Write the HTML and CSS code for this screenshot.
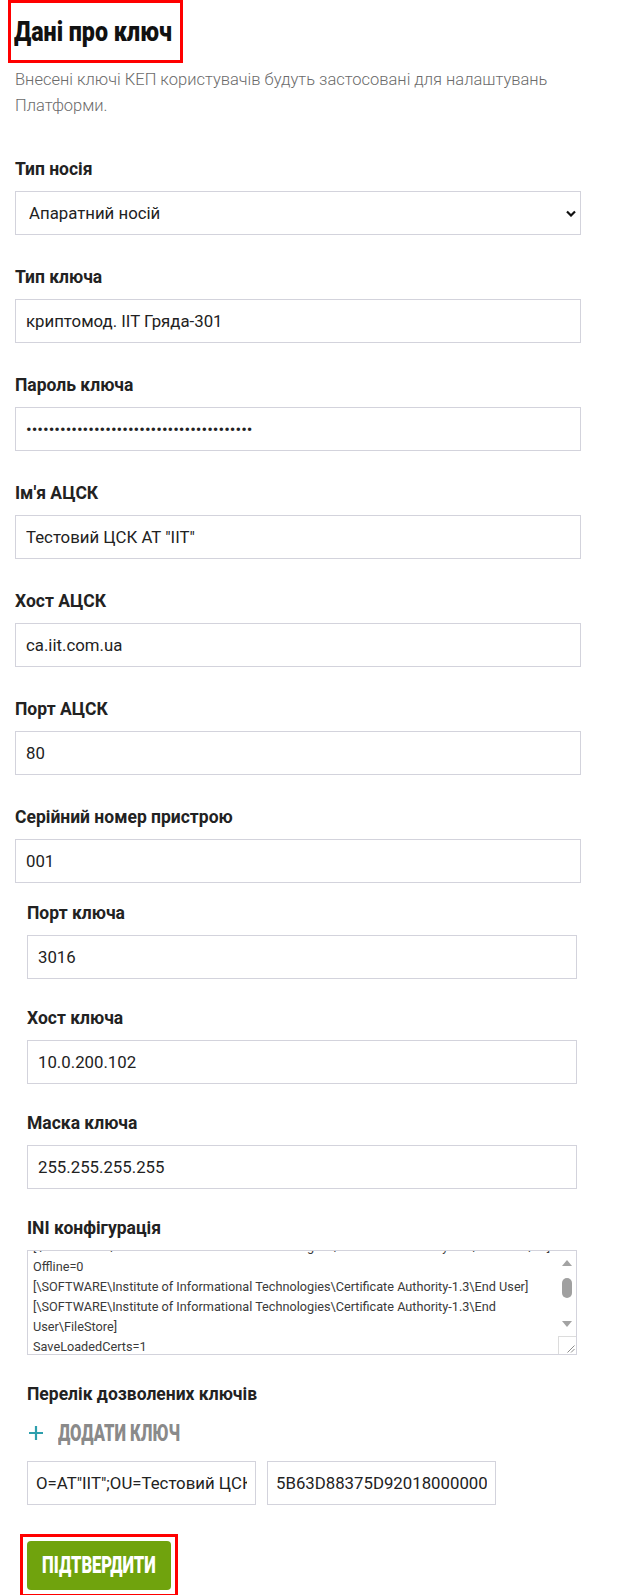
FILE: index.html
```html
<!DOCTYPE html>
<html lang="uk">
<head>
    <meta charset="UTF-8">
    <meta name="viewport" content="width=device-width, initial-scale=1.0">
    <title>Дані про ключ</title>
    <link rel="stylesheet" href="styles.css">
</head>
<body>
    <div class="page">
        <div class="marked marked-title">
            <h1 class="title"><span class="narrow title-text">Дані про ключ</span></h1>
        </div>
        <p class="intro">Внесені ключі КЕП користувачів будуть застосовані для налаштувань Платформи.</p>

        <div class="field">
            <label class="field-label" for="carrierType">Тип носія</label>
            <select id="carrierType" class="field-input field-select">
                <option>Апаратний носій</option>
                <option>Файловий носій</option>
            </select>
        </div>
        <div class="field">
            <label class="field-label" for="keyType">Тип ключа</label>
            <input type="text" id="keyType" class="field-input" value="криптомод. ІІТ Гряда-301">
        </div>
        <div class="field">
            <label class="field-label" for="keyPassword">Пароль ключа</label>
            <input type="password" id="keyPassword" class="field-input" value="passwordpasswordpasswordpasswordpassword">
        </div>
        <div class="field">
            <label class="field-label" for="caName">Ім'я АЦСК</label>
            <input type="text" id="caName" class="field-input" value='Тестовий ЦСК АТ "ІІТ"'>
        </div>
        <div class="field">
            <label class="field-label" for="caHost">Хост АЦСК</label>
            <input type="text" id="caHost" class="field-input" value="ca.iit.com.ua">
        </div>
        <div class="field">
            <label class="field-label" for="caPort">Порт АЦСК</label>
            <input type="text" id="caPort" class="field-input" value="80">
        </div>
        <div class="field field-last">
            <label class="field-label" for="deviceSerial">Серійний номер пристрою</label>
            <input type="text" id="deviceSerial" class="field-input" value="001">
        </div>

        <!-- Параметри апаратного носія -->
        <div class="hardware">
            <div class="field">
                <label class="field-label" for="keyPort">Порт ключа</label>
                <input type="text" id="keyPort" class="field-input" value="3016">
            </div>
            <div class="field">
                <label class="field-label" for="keyHost">Хост ключа</label>
                <input type="text" id="keyHost" class="field-input" value="10.0.200.102">
            </div>
            <div class="field">
                <label class="field-label" for="keyMask">Маска ключа</label>
                <input type="text" id="keyMask" class="field-input" value="255.255.255.255">
            </div>
            <div class="field">
                <label class="field-label" for="iniConfig">INI конфігурація</label>
                <div class="ini-box">
                    <textarea id="iniConfig" class="ini-text">[\SOFTWARE\Institute of Informational Technologies\Certificate Authority-1.3\End User\Proxy]
Use=0
Anonymous=1
Address=
Port=3128
User=
SavePassword=0
Password=
[\SOFTWARE\Institute of Informational Technologies\Certificate Authority-1.3\End User\CA]
Offline=0
[\SOFTWARE\Institute of Informational Technologies\Certificate Authority-1.3\End User]
[\SOFTWARE\Institute of Informational Technologies\Certificate Authority-1.3\End User\FileStore]
SaveLoadedCerts=1
CheckCRLs=0
AutoRefresh=1
OwnCRLsOnly=0
FullAndDeltaCRLs=0
AutoDownloadCRLs=0
Expiring=24
Path=/data/certificates
[\SOFTWARE\Institute of Informational Technologies\Certificate Authority-1.3\End User\TSP]
GetStamps=1
Address=ca.iit.com.ua
Port=80
[\SOFTWARE\Institute of Informational Technologies\Certificate Authority-1.3\End User\OCSP]
Use=1
BeforeStore=1
Address=ca.iit.com.ua
Port=80
[\SOFTWARE\Institute of Informational Technologies\Certificate Authority-1.3\End User\LDAP]
Use=0</textarea>
                    <div class="ini-scrollbar">
                        <span class="sb-button"><span class="sb-arrow sb-arrow-up"></span></span>
                        <span class="sb-track"><span class="sb-thumb"></span></span>
                        <span class="sb-button"><span class="sb-arrow sb-arrow-down"></span></span>
                        <span class="sb-corner">
                            <svg width="9" height="9" viewBox="0 0 9 9">
                                <path d="M8.5 1.5L1.5 8.5M8.5 5L5 8.5" stroke="#8c8c8c" stroke-width="1" fill="none"/>
                            </svg>
                        </span>
                    </div>
                </div>
            </div>
            <div class="field field-keys">
                <span class="field-label field-label-keys">Перелік дозволених ключів</span>
                <div class="add-key">
                    <svg class="add-key-icon" width="16" height="16" viewBox="0 0 16 16">
                        <path d="M8 1v14M1 8h14" stroke="#2d9fad" stroke-width="2.2" fill="none"/>
                    </svg>
                    <span class="narrow add-key-text">Додати ключ</span>
                </div>
                <div class="key-row">
                    <input type="text" class="field-input key-input" value='O=AT"IIT";OU=Тестовий ЦСК АТ "ІІТ";CN=Тестовий ЦСК АТ "ІІТ";Serial=UA-22723472-2018;C=UA;L=Харків'>
                    <input type="text" class="field-input key-input" value="5B63D88375D9201800000000010000001400000">
                </div>
            </div>

            <div class="marked marked-button">
                <button class="submit"><span class="narrow submit-text">Підтвердити</span></button>
            </div>
        </div>
    </div>

    <script>
        document.addEventListener('DOMContentLoaded', function() {
            const iniConfig = document.getElementById('iniConfig');
            const fullText = iniConfig.value;
            const offlineAt = fullText.indexOf('Offline=0');

            // міряємо висоту тексту до рядка Offline, щоб прокрутити до нього
            iniConfig.value = fullText.slice(0, offlineAt - 1);
            iniConfig.style.height = '0px';
            const textHeight = iniConfig.scrollHeight;
            iniConfig.style.height = '';
            iniConfig.value = fullText;

            iniConfig.scrollTop = textHeight - 4 - 6;
        });
    </script>
</body>
</html>
```

FILE: styles.css
```css
body {
    margin: 0;
    padding: 0;
    background: #fff;
    color: #222;
    font-family: Roboto, "Noto Sans", Arial, sans-serif;
}

.page {
    padding: 0 40px 0 15px;
}

.marked {
    display: inline-block;
    border: 3px solid #ff0000;
}

.narrow {
    display: inline-block;
    white-space: nowrap;
    font-weight: 900;
    text-transform: uppercase;
}

.marked-title {
    width: 166px;
    margin-left: -7px;
    padding: 0 0 0 3px;
}

.title {
    margin: 0;
    font-size: 28px;
    line-height: 57px;
    color: #111;
}

.title-text {
    text-transform: none;
    transform: scaleX(0.83);
    transform-origin: left center;
}

.intro {
    margin: 4px 0 40px;
    max-width: 560px;
    font-size: 16.5px;
    font-weight: 300;
    line-height: 26px;
    color: #6b6b6b;
}

.field {
    margin-bottom: 32px;
}

.field-last {
    margin-bottom: 20px;
}

.field-label {
    display: block;
    margin-bottom: 12px;
    font-size: 17.5px;
    font-weight: bold;
    line-height: 20px;
    color: #222;
}

.field-input {
    display: block;
    width: 100%;
    height: 44px;
    box-sizing: border-box;
    margin: 0;
    padding: 0 10px;
    border: 1px solid #d3d3dc;
    border-radius: 0;
    background-color: #fff;
    font-family: Roboto, "Noto Sans", Arial, sans-serif;
    font-size: 16.8px;
    color: #222;
    outline: none;
}

.field-select {
    appearance: none;
    -webkit-appearance: none;
    padding-left: 13px;
    background-image: url("data:image/svg+xml,%3Csvg xmlns='http://www.w3.org/2000/svg' width='10' height='7' viewBox='0 0 10 7'%3E%3Cpath d='M1 1.5l4 4 4-4' stroke='%23111' stroke-width='2.2' fill='none'/%3E%3C/svg%3E");
    background-repeat: no-repeat;
    background-position: right 4px center;
}

.hardware {
    margin: 0 4px 0 12px;
}

.hardware .field {
    margin-bottom: 29px;
}

/* текстове поле з власною смугою прокрутки */
.ini-box {
    display: flex;
    height: 105px;
    box-sizing: border-box;
    border: 1px solid #d3d3dc;
    background-color: #fff;
}

.ini-text {
    flex: 1;
    min-width: 0;
    margin: 0;
    padding: 4px 0 4px 5px;
    border: none;
    outline: none;
    resize: none;
    overflow-y: scroll;
    scrollbar-width: none;
    font-family: Roboto, "Noto Sans", Arial, sans-serif;
    font-size: 12.7px;
    line-height: 20px;
    color: #3a3a3a;
}

.ini-scrollbar {
    display: flex;
    flex-direction: column;
    width: 18px;
}

.sb-button {
    display: flex;
    align-items: center;
    justify-content: center;
    height: 24px;
}

.sb-button + .sb-corner {
    margin-top: 0;
}

.sb-arrow {
    width: 0;
    height: 0;
    border-left: 5px solid transparent;
    border-right: 5px solid transparent;
}

.sb-arrow-up {
    border-bottom: 6px solid #a3a3a3;
}

.sb-arrow-down {
    border-top: 6px solid #a3a3a3;
}

.sb-track {
    display: flex;
    flex: 1;
    flex-direction: column;
    align-items: center;
    padding-top: 3px;
}

.sb-thumb {
    width: 10px;
    height: 20px;
    border-radius: 5px;
    background-color: #a0a0a0;
}

.sb-corner {
    display: flex;
    align-items: flex-end;
    justify-content: flex-end;
    height: 18px;
    box-sizing: border-box;
    padding: 0 1px 1px 0;
    border-top: 1px solid #dcdcdc;
    border-left: 1px solid #dcdcdc;
}

.field-keys {
    margin-bottom: 28px;
}

.field-label-keys {
    margin-bottom: 15px;
}

.add-key {
    display: flex;
    align-items: center;
    gap: 14px;
    height: 28px;
    margin-bottom: 14px;
    padding-left: 1px;
    cursor: pointer;
}

.add-key-text {
    font-size: 24px;
    color: #8a8a8a;
    transform: scaleX(0.69);
    transform-origin: left center;
}

.key-row {
    display: flex;
    gap: 11px;
}

.key-input {
    width: 229px;
    padding: 0 8px;
}

.marked-button {
    margin-left: -7px;
    padding: 4px;
}

.submit {
    display: flex;
    align-items: center;
    justify-content: center;
    width: 144px;
    height: 49px;
    padding: 0;
    border: none;
    border-radius: 4px;
    background-color: #70a30d;
    font-family: Roboto, "Noto Sans", Arial, sans-serif;
    font-size: 23px;
    color: #fff;
    cursor: pointer;
    overflow: visible;
}

.submit-text {
    transform: scaleX(0.72);
}

.submit:hover {
    background-color: #5f8c0a;
}
```
